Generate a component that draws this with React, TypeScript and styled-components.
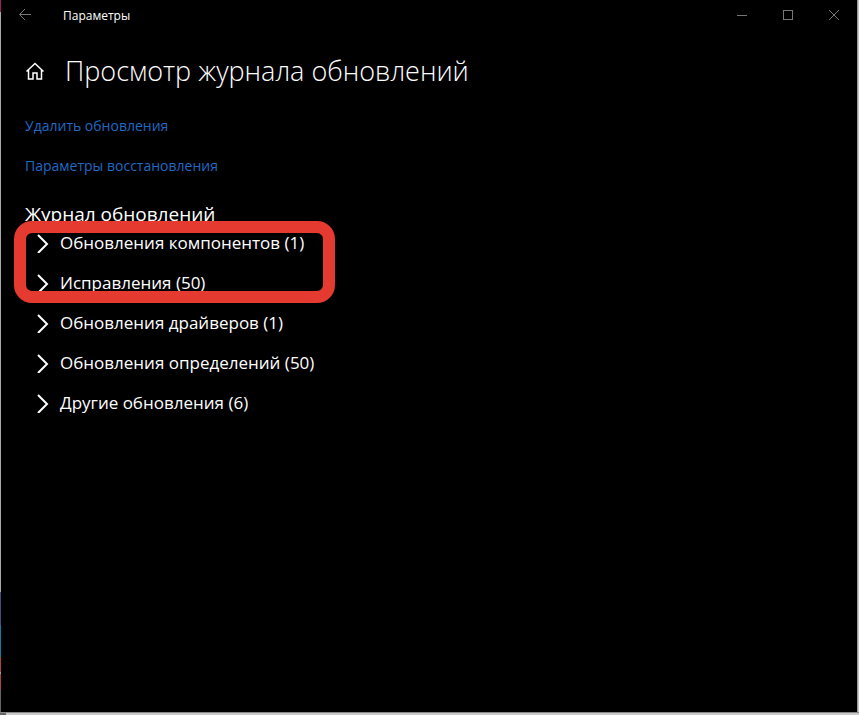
import React from "react";
import styled, { createGlobalStyle } from "styled-components";

const GlobalStyle = createGlobalStyle`
  * { box-sizing: border-box; }
  body {
    margin: 0;
    background: #c9c9c9;
    color: #fff;
    font-family: "Open Sans", "Noto Sans", sans-serif;
  }
  h1, h2, ul { margin: 0; padding: 0; }
`;

const Desktop = styled.div`
  min-height: 100vh;
  display: grid;
  grid-template-columns: 1px minmax(0, 1fr) 2px;
  grid-template-rows: 1fr 3px;
`;

const DesktopEdge = styled.div`
  background: linear-gradient(
    #9c1f63 0 12px,
    #a9a9a9 12px 592px,
    #434a80 592px 625px,
    #0f7ba8 625px 657px,
    #ad483b 657px 672px,
    #a0a0a0 672px 674px,
    #ad483b 674px 689px,
    #666 689px
  );
`;

const RightEdge = styled.div`
  background: #c9c9c9;
  border-left: 1px solid #999;
`;

const BottomEdge = styled.div`
  grid-column: 1 / -1;
  border-top: 1px solid #888;
  background: linear-gradient(90deg, #666 0 6px, #c9c9c9 6px);
`;

const Window = styled.div`
  background: #000;
  min-width: 0;
`;

const TitleBar = styled.header`
  display: flex;
  align-items: center;
  height: 32px;
`;

const BarButton = styled.button<{ $width: number }>`
  display: flex;
  align-items: center;
  justify-content: center;
  width: ${(p) => p.$width}px;
  height: 30px;
  align-self: flex-start;
  padding: 0;
  border: 0;
  background: transparent;
  color: #777;
`;

const WindowTitle = styled.span`
  flex: 1;
  padding-left: 14px;
  font-size: 12px;
  line-height: 32px;
`;

const Content = styled.main`
  padding: 15px 24px;
`;

const Heading = styled.div`
  display: flex;
  align-items: center;
  gap: 20px;
  height: 48px;
`;

const HomeButton = styled.button`
  display: flex;
  padding: 0;
  border: 0;
  background: transparent;
  color: #fff;
`;

const PageTitle = styled.h1`
  font-size: 27px;
  font-weight: 350;
  line-height: 48px;
  white-space: nowrap;
`;

const Links = styled.nav`
  display: flex;
  flex-direction: column;
  align-items: flex-start;
  gap: 20px;
  margin-top: 21px;
`;

const TextLink = styled.a`
  color: #2069c4;
  font-size: 14px;
  line-height: 20px;
  text-decoration: none;
`;

const SectionTitle = styled.h2`
  margin-top: 29px;
  font-size: 19px;
  font-weight: 400;
  line-height: 18px;
`;

const Group = styled.ul`
  position: relative;
  width: fit-content;
  list-style: none;
`;

const Highlight = styled.li`
  position: absolute;
  inset: -2px -31px 0 -11px;
  border: 12px solid #e53a30;
  border-radius: 18px;
  pointer-events: none;
`;

const CategoryButton = styled.button`
  display: flex;
  align-items: center;
  gap: 11px;
  height: 40px;
  padding: 0 0 0 12px;
  border: 0;
  background: transparent;
  color: #fff;
  font: inherit;
  font-size: 17px;
  line-height: 24px;
  white-space: nowrap;
`;

const Chevron = () => (
  <svg width="12" height="20" viewBox="0 0 12 20" fill="none" stroke="currentColor" strokeWidth="2" aria-hidden="true">
    <path d="M1 2 L10 11 L1 20" />
  </svg>
);

const Category = ({ name, count }: { name: string; count: number }) => (
  <li>
    <CategoryButton type="button" aria-expanded={false}>
      <Chevron />
      <span>{name} ({count})</span>
    </CategoryButton>
  </li>
);

const highlighted = [
  { name: "Обновления компонентов", count: 1 },
  { name: "Исправления", count: 50 },
];

const remaining = [
  { name: "Обновления драйверов", count: 1 },
  { name: "Обновления определений", count: 50 },
  { name: "Другие обновления", count: 6 },
];

export default function App() {
  return (
    <>
      <GlobalStyle />
      <Desktop>
        <DesktopEdge />
        <Window>
          <TitleBar>
            <BarButton type="button" aria-label="Назад" $width={48}>
              <svg width="12" height="12" viewBox="0 0 12 12" fill="none" stroke="currentColor">
                <path d="M0.5 5.5 H12 M6 0 L0.5 5.5 L6 11" />
              </svg>
            </BarButton>
            <WindowTitle>Параметры</WindowTitle>
            <BarButton type="button" aria-label="Свернуть" $width={46}>
              <svg width="10" height="10" viewBox="0 0 10 10" stroke="currentColor">
                <path d="M0 5.5 H10" />
              </svg>
            </BarButton>
            <BarButton type="button" aria-label="Развернуть" $width={46}>
              <svg width="10" height="10" viewBox="0 0 10 10" fill="none" stroke="currentColor">
                <rect x="0.5" y="0.5" width="9" height="9" />
              </svg>
            </BarButton>
            <BarButton type="button" aria-label="Закрыть" $width={46}>
              <svg width="10" height="10" viewBox="0 0 10 10" stroke="currentColor">
                <path d="M0 0 L10 10 M10 0 L0 10" />
              </svg>
            </BarButton>
          </TitleBar>
          <Content>
            <Heading>
              <HomeButton type="button" aria-label="Главная">
                <svg width="20" height="18" viewBox="0 0 20 18" fill="none" stroke="currentColor" strokeWidth="1.5">
                  <path d="M1.5 9.5 L10 1.5 L18.5 9.5 M3.5 8 V17 H8 V11 H12 V17 H16.5 V8" />
                </svg>
              </HomeButton>
              <PageTitle>Просмотр журнала обновлений</PageTitle>
            </Heading>
            <Links>
              <TextLink href="#uninstall">Удалить обновления</TextLink>
              <TextLink href="#recovery">Параметры восстановления</TextLink>
            </Links>
            <SectionTitle>Журнал обновлений</SectionTitle>
            <Group>
              {highlighted.map((c) => <Category key={c.name} {...c} />)}
              <Highlight aria-hidden="true" />
            </Group>
            <Group>
              {remaining.map((c) => <Category key={c.name} {...c} />)}
            </Group>
          </Content>
        </Window>
        <RightEdge />
        <BottomEdge />
      </Desktop>
    </>
  );
}
